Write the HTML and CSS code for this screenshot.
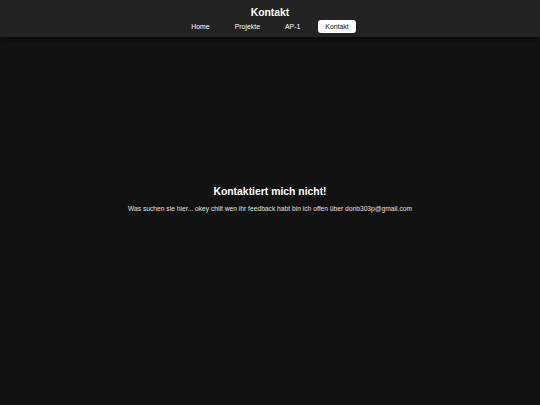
FILE: index.html
```html
<!DOCTYPE html>
<html lang="de">
<head>
<meta charset="utf-8">
<title>Kontakt</title>
<link rel="stylesheet" href="styles.css">
</head>
<body>
<header class="site-header">
  <h1 class="site-title">Kontakt</h1>
  <nav class="site-nav">
    <a class="nav-link" href="#">Home</a>
    <a class="nav-link" href="#">Projekte</a>
    <a class="nav-link" href="#">AP-1</a>
    <a class="nav-link active" href="#">Kontakt</a>
  </nav>
</header>
<main class="content">
  <h2 class="headline">Kontaktiert mich nicht!</h2>
  <p class="text">Was suchen sie hier... okey chilt wen ihr feedback habt bin ich offen über donb303p@gmail.com</p>
</main>
</body>
</html>
```
FILE: styles.css
```css
html, body {
  margin: 0;
  padding: 0;
  height: 100%;
}
body {
  background: #121212;
  color: #ffffff;
  font-family: "Liberation Sans", Arial, sans-serif;
  display: flex;
  flex-direction: column;
}
.site-header {
  background: #222222;
  box-shadow: 0 2px 6px rgba(0, 0, 0, 0.6);
  padding: 5px 0 4px;
  display: flex;
  flex-direction: column;
  align-items: center;
  position: relative;
  z-index: 1;
}
.site-title {
  margin: 0;
  font-size: 10.4px;
  line-height: 15px;
  font-weight: bold;
}
.site-nav {
  display: flex;
  gap: 11px;
}
.nav-link {
  color: #ffffff;
  text-decoration: none;
  font-size: 6.9px;
  line-height: 7px;
  padding: 3px 7px;
  border-radius: 3px;
}
.nav-link.active {
  background: #ffffff;
  color: #121212;
}
.content {
  flex: 1;
  display: flex;
  flex-direction: column;
  align-items: center;
  justify-content: center;
  padding-bottom: 44px;
}
.headline {
  margin: 0;
  font-size: 10.4px;
  line-height: 13px;
  font-weight: bold;
}
.text {
  margin: 7px 0 0;
  font-size: 6.7px;
  line-height: 8px;
  color: #e0e0e0;
}
```
